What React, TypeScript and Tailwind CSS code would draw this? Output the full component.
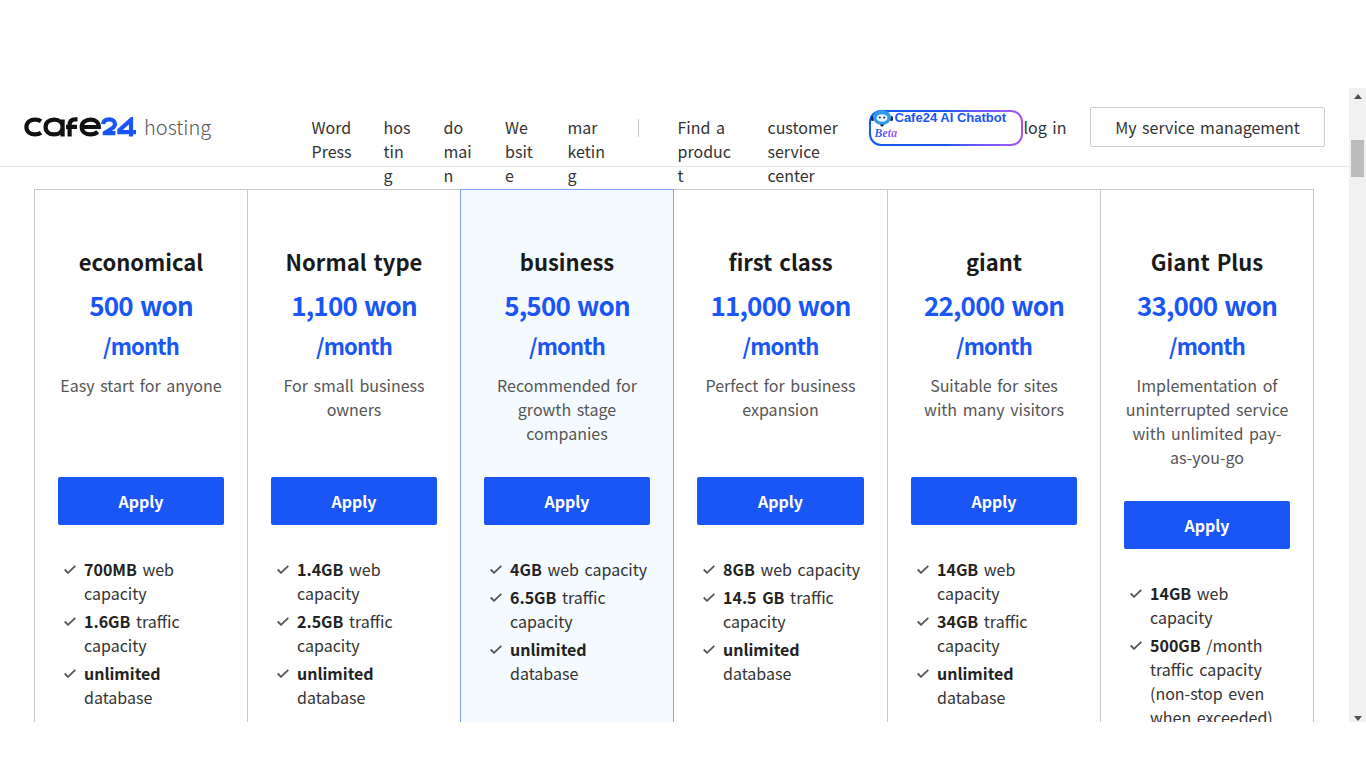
import React from 'react'

const FONT = "font-['Noto_Sans_CJK_KR','Noto_Sans',sans-serif] [word-spacing:2px]"

interface Feature {
  bold: string
  rest: string
}

interface Plan {
  name: string
  price: string
  desc: string
  col: string
  features: Feature[]
}

const PLANS: Plan[] = [
  {
    name: 'economical',
    price: '500 won',
    desc: 'Easy start for anyone',
    col: 'border-l border-t border-[#c8c8c8]',
    features: [
      { bold: '700MB', rest: ' web capacity' },
      { bold: '1.6GB', rest: ' traffic capacity' },
      { bold: 'unlimited', rest: ' database' },
    ],
  },
  {
    name: 'Normal type',
    price: '1,100 won',
    desc: 'For small business owners',
    col: 'border-l border-t border-[#c8c8c8]',
    features: [
      { bold: '1.4GB', rest: ' web capacity' },
      { bold: '2.5GB', rest: ' traffic capacity' },
      { bold: 'unlimited', rest: ' database' },
    ],
  },
  {
    name: 'business',
    price: '5,500 won',
    desc: 'Recommended for growth stage companies',
    col: 'border-x border-t border-[#82a3f5] bg-[#f5faff]',
    features: [
      { bold: '4GB', rest: ' web capacity' },
      { bold: '6.5GB', rest: ' traffic capacity' },
      { bold: 'unlimited', rest: ' database' },
    ],
  },
  {
    name: 'first class',
    price: '11,000 won',
    desc: 'Perfect for business expansion',
    col: 'border-t border-[#c8c8c8]',
    features: [
      { bold: '8GB', rest: ' web capacity' },
      { bold: '14.5 GB', rest: ' traffic capacity' },
      { bold: 'unlimited', rest: ' database' },
    ],
  },
  {
    name: 'giant',
    price: '22,000 won',
    desc: 'Suitable for sites with many visitors',
    col: 'border-l border-t border-[#c8c8c8]',
    features: [
      { bold: '14GB', rest: ' web capacity' },
      { bold: '34GB', rest: ' traffic capacity' },
      { bold: 'unlimited', rest: ' database' },
    ],
  },
  {
    name: 'Giant Plus',
    price: '33,000 won',
    desc: 'Implementation of uninterrupted service with unlimited pay-as-you-go',
    col: 'border-x border-t border-[#c8c8c8]',
    features: [
      { bold: '14GB', rest: ' web capacity' },
      { bold: '500GB', rest: ' /month traffic capacity (non-stop even when exceeded)' },
    ],
  },
]

// The narrow nav cells break mid-word in the source page, so widths are fixed.
const NAV_LEFT = [
  { label: 'Word Press', w: 'w-[40px]', breakAll: false },
  { label: 'hosting', w: 'w-[28px]', breakAll: true },
  { label: 'domain', w: 'w-[29.5px]', breakAll: true },
  { label: 'Website', w: 'w-[30.5px]', breakAll: true },
  { label: 'marketing', w: 'w-[38px]', breakAll: true },
]

function Logo() {
  return (
    <svg width="112" height="20" viewBox="0 0 112 20" fill="none" strokeWidth="4.2" aria-label="cafe24">
      <g stroke="#111">
        <path d="M17 4.2C15.4 3 13.6 2.6 11 2.6 6.6 2.6 2.4 5 2.4 10s4.2 7.4 8.6 7.4c2.6 0 4.4-.4 6-1.6" />
        <path d="M38.6 10c0 4-3 7.4-8.4 7.4S21.6 14.400 21.600 10s3.200-7.400 8.600-7.400 8.400 3.400 8.400 7.400zM38.600 2.600v17" />
        <path d="M45.600 19.500V8c0-3.800 2-5.600 5.600-5.600h2.300M42 9.800h11" />
        <path d="M57.700 10h17.100c0-4.600-3.400-7.400-8.300-7.400-5.200 0-8.800 3-8.800 7.400s3.600 7.400 8.800 7.400c3 0 5.400-.8 7.200-2.600" />
      </g>
      <g stroke="#1a56f5">
        <path d="M79.200 7.200c.2-3 2.400-4.800 6-4.800 3.400 0 5.800 1.600 5.800 4.600 0 2.200-1.200 3.400-3.400 4.800l-6.800 4.200v.200h10.600" strokeLinejoin="miter" />
        <path d="M107 19.600V2.800L95.400 13.200v1.900H112" />
      </g>
    </svg>
  )
}

function ChatbotFace() {
  return (
    <svg width="22" height="17" viewBox="0 0 22 17" className="absolute left-0 top-[-2px]">
      <rect x="0" y="6" width="3" height="5" rx="1.500" fill="#1f2a44" />
      <rect x="19" y="6" width="3" height="5" rx="1.500" fill="#1f2a44" />
      <ellipse cx="11" cy="7.500" rx="9" ry="7.500" fill="#2f9bf0" />
      <ellipse cx="11" cy="8" rx="5.500" ry="3.800" fill="#e8f4ff" />
      <circle cx="8.800" cy="7.500" r="1" fill="#1f2a44" />
      <circle cx="13.200" cy="7.500" r="1" fill="#1f2a44" />
      <path d="M9 14.500h4l-1 2h-2z" fill="#1f2a44" />
    </svg>
  )
}

function Chatbot() {
  return (
    <div className="mt-[2px] ml-[30px] h-9 w-[154.5px] shrink-0 rounded-[12px] bg-gradient-to-r from-[#0f5bf5] via-[#1a56f5] to-[#a855f7] p-[2px] [word-spacing:0]">
      <div className="relative h-full w-full rounded-[10px] bg-white">
        <ChatbotFace />
        <span className="absolute left-[24px] top-[-2px] font-['Liberation_Sans',sans-serif] text-[13px] leading-[16px] font-bold whitespace-nowrap text-[#1a56f5]">
          Cafe24 AI Chatbot
        </span>
        <span className="absolute left-[4px] top-[14px] bg-gradient-to-r from-[#1a56f5] to-[#a855f7] bg-clip-text font-['Liberation_Serif',serif] text-[12px] leading-[14px] font-bold italic text-transparent">
          Beta
        </span>
      </div>
    </div>
  )
}

function Check() {
  return (
    <svg width="12" height="9" viewBox="0 0 12 9" fill="none" className="absolute left-px top-2">
      <path d="M.7 4.500l3.300 3.300L11.300.8" stroke="#555" strokeWidth="1.800" />
    </svg>
  )
}

function PlanColumn({ plan }: { plan: Plan }) {
  return (
    <div className={`px-[23px] pt-[58px] ${plan.col}`}>
      <h3 className="text-center text-[22px] leading-[26px] font-semibold text-[#1a1a1a]">{plan.name}</h3>
      <div className="mt-[11px] text-center text-[26px] leading-[40px] font-bold tracking-[-0.8px] text-[#1a56f5]">
        <div>{plan.price}</div>
        <div className="text-[22px] leading-[41px] tracking-[-0.8px]">/month</div>
      </div>
      <p className="mt-[7px] min-h-[72px] text-center text-[16px] leading-[24px] text-[#555]">{plan.desc}</p>
      <button
        type="button"
        className="mt-[32px] block h-12 w-full rounded-[2px] bg-[#1a56f5] text-[16px] font-bold text-white"
      >
        Apply
      </button>
      <ul className="mt-[32px] pl-[5px] text-[16px] leading-[24px] text-[#333]">
        {plan.features.map((f) => (
          <li key={f.bold} className="relative mb-[4px] pl-[21px]">
            <Check />
            <b className="font-bold text-[#222]">{f.bold}</b>
            {f.rest}
          </li>
        ))}
      </ul>
    </div>
  )
}

function Scrollbar() {
  return (
    <div className="relative -mt-[2px] flex w-[17px] shrink-0 flex-col items-center justify-between bg-[#f1f1f1]">
      <div className="flex h-4 w-full items-center justify-center">
        <div className="h-0 w-0 border-x-4 border-b-[5px] border-x-transparent border-b-[#505050]" />
      </div>
      <div className="absolute top-[52px] left-[2px] h-[37px] w-[13px] bg-[#bcbdbb]" />
      <div className="flex h-2 w-full items-center justify-center">
        <div className="h-0 w-0 border-x-4 border-t-[5px] border-x-transparent border-t-[#505050]" />
      </div>
    </div>
  )
}

export default function App() {
  return (
    <div className={`h-screen overflow-hidden bg-white pt-[90px] ${FONT}`}>
      <div className="flex h-[632px]">
        <div className="h-full min-w-0 flex-1 overflow-hidden">
          <header className="flex h-[77px] items-center border-b border-[#e8e8e8] pb-[2px] pl-6 pr-6">
            <div className="flex w-[287.5px] shrink-0 items-center">
              <Logo />
              <span className="ml-[8px] text-[20px] leading-[30px] font-light text-[#555]">hosting</span>
            </div>
            <nav className="flex h-full items-start gap-[32px] pt-[25px] text-[16px] leading-[24px] text-[#333]">
              {NAV_LEFT.map((n) => (
                <a key={n.label} className={`${n.w} block ${n.breakAll ? 'break-all' : ''}`}>
                  {n.label}
                </a>
              ))}
            </nav>
            <div className="mt-[2px] mr-[39px] ml-[32px] h-[18px] w-px shrink-0 bg-[#ccc]" />
            <nav className="flex h-full items-start gap-[35px] pt-[25px] text-[16px] leading-[24px] text-[#333]">
              <a className="block w-[55px] break-words">Find a produc t</a>
              <a className="block w-[71px]">customer service center</a>
            </nav>
            <Chatbot />
            <a className="ml-[0.5px] shrink-0 text-[16px] leading-[24px] whitespace-nowrap text-[#333]">log in</a>
            <button
              type="button"
              className="ml-auto h-10 w-[235px] shrink-0 rounded-[2px] border border-[#ccc] text-[16px] text-[#333] [word-spacing:2px]"
            >
              My service management
            </button>
          </header>
          <div className="mt-[22px] ml-[34px] grid w-[1280px] grid-cols-[213px_213px_214px_213px_213px_214px]">
            {PLANS.map((p) => (
              <PlanColumn key={p.name} plan={p} />
            ))}
          </div>
        </div>
        <Scrollbar />
      </div>
    </div>
  )
}
